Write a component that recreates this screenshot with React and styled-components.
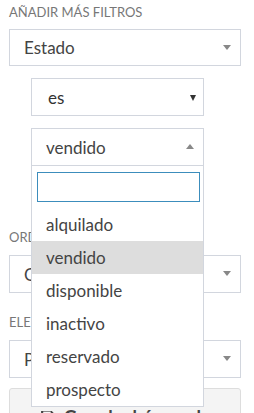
import styled, { createGlobalStyle } from "styled-components";

const GlobalStyle = createGlobalStyle`
  html, body {
    margin: 0;
    padding: 0;
    background: #fff;
    overflow: hidden;
  }
  body {
    font-family: Lato, "Open Sans", sans-serif;
  }
`;

const Panel = styled.div`
  width: 232px;
  padding: 0 13px 0 9px;
  display: flex;
  flex-direction: column;
`;

const SectionLabel = styled.div`
  font-size: 13px;
  line-height: 20px;
  color: #777;
  text-transform: uppercase;
  margin-top: ${(p) => p.$top || 0}px;
  margin-bottom: ${(p) => p.$bottom || 8}px;
`;

const SelectBox = styled.div`
  position: relative;
  box-sizing: border-box;
  height: ${(p) => p.$h || 38}px;
  border: 1px solid #d2d6de;
  background: #fff;
  display: flex;
  align-items: center;
  padding-left: ${(p) => p.$pad || 14}px;
  font-size: 17px;
  color: ${(p) => (p.$native ? "#333" : "#444")};
`;

const Caret = styled.span`
  position: absolute;
  right: 9px;
  top: 50%;
  margin-top: -3px;
  width: 0;
  height: 0;
  border-style: solid;
  border-color: ${(p) =>
    p.$up ? "transparent transparent #888 transparent" : "#888 transparent transparent transparent"};
  border-width: ${(p) => (p.$up ? "0 4px 5px 4px" : "5px 4px 0 4px")};
`;

const NativeCaret = styled.span`
  position: absolute;
  right: 7px;
  top: 50%;
  margin-top: -2px;
  width: 0;
  height: 0;
  border-style: solid;
  border-color: #333 transparent transparent transparent;
  border-width: 6px 3.5px 0 3.5px;
`;

const SubGroup = styled.div`
  margin: 12px 37px 0 22px;
  display: flex;
  flex-direction: column;
  gap: 12px;
`;

const OpenSelect = styled.div`
  position: relative;
`;

const Dropdown = styled.div`
  position: absolute;
  left: 0;
  right: 0;
  top: 100%;
  box-sizing: border-box;
  background: #fff;
  border: 1px solid #d2d6de;
  border-top: none;
  z-index: 10;
`;

const SearchWrap = styled.div`
  padding: 6px 3px 6px 5px;
`;

const SearchInput = styled.div`
  box-sizing: border-box;
  height: 30px;
  border: 1px solid #3c8dbc;
`;

const Option = styled.div`
  height: 33px;
  display: flex;
  align-items: center;
  padding-left: 14px;
  font-size: 17px;
  color: #444;
  background: ${(p) => (p.$active ? "#ddd" : "transparent")};
`;

const SaveButton = styled.div`
  margin-top: 10px;
  box-sizing: border-box;
  height: 52px;
  padding-top: 18px;
  border: 1px solid #ddd;
  border-radius: 3px;
  background: #f4f4f4;
  display: flex;
  align-items: flex-start;
  justify-content: center;
  gap: 9px;
  font-size: 18px;
  line-height: 20px;
  font-weight: bold;
  color: #444;
`;

const SaveIcon = styled.svg`
  margin-top: 3px;
`;

const options = ["alquilado", "vendido", "disponible", "inactivo", "reservado", "prospecto"];

export default function App() {
  return (
    <>
      <GlobalStyle />
      <Panel>
        <SectionLabel $top={2} $bottom={7}>Añadir más filtros</SectionLabel>
        <SelectBox $h={37}>
          Estado
          <Caret />
        </SelectBox>
        <SubGroup>
          <SelectBox $pad={16} $native>
            es
            <NativeCaret />
          </SelectBox>
          <OpenSelect>
            <SelectBox>
              vendido
              <Caret $up />
            </SelectBox>
            <Dropdown>
              <SearchWrap>
                <SearchInput />
              </SearchWrap>
              {options.map((o) => (
                <Option key={o} $active={o === "vendido"}>
                  {o}
                </Option>
              ))}
            </Dropdown>
          </OpenSelect>
        </SubGroup>
        <SectionLabel $top={61}>Ordenar por</SectionLabel>
        <SelectBox>
          Ordenar
          <Caret />
        </SelectBox>
        <SectionLabel $top={19}>Elementos por página</SectionLabel>
        <SelectBox>
          Por página
          <Caret />
        </SelectBox>
        <SaveButton>
          <SaveIcon width="15" height="15" viewBox="0 0 14 14">
            <path d="M1 1h10l2 2v10H1z" fill="#444" />
            <rect x="3" y="1.5" width="7" height="4" fill="#f4f4f4" />
            <circle cx="7" cy="9.5" r="2" fill="#f4f4f4" />
          </SaveIcon>
          Guardar búsqueda
        </SaveButton>
      </Panel>
    </>
  );
}
